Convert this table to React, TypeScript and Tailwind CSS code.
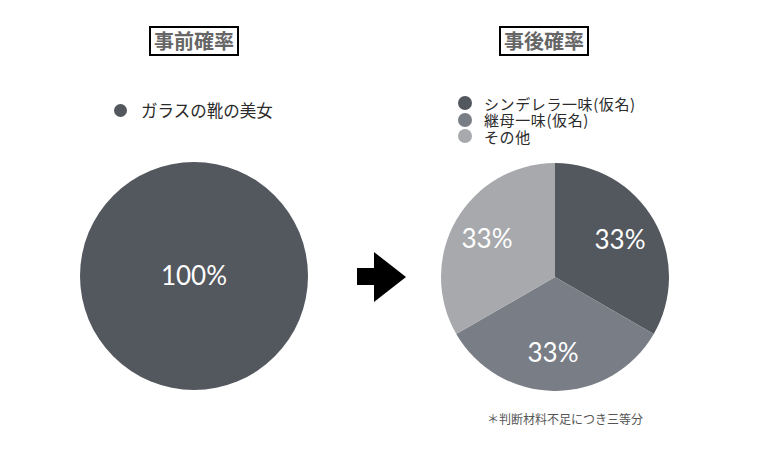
import React from "react";

const JP = "font-['Noto_Sans_CJK_JP',sans-serif]";

const DARK = "#53575e";
const MID = "#797d86";
const LIGHT = "#a7a9ac";

function Title({ children, className = "" }: { children: React.ReactNode; className?: string }) {
  return (
    <div
      className={`${JP} border-2 border-black px-[3px] h-[30px] flex items-center text-[20px] font-bold leading-none text-[#666666] ${className}`}
    >
      {children}
    </div>
  );
}

function LegendItem({ color, label }: { color: string; label: string }) {
  return (
    <div className="flex items-center h-[16.5px]">
      <span className="w-[14px] h-[14px] rounded-full shrink-0" style={{ backgroundColor: color }} />
      <span className={`${JP} ml-[12px] text-[15px] tracking-[0.6px] leading-[15px] text-[#2b2b2b]`}>{label}</span>
    </div>
  );
}

export default function App() {
  return (
    <div className="w-[781px] h-[461px] bg-white overflow-hidden">
      <div className="flex items-start pl-[80px]">
        {/* 事前 */}
        <div className="w-[228px] flex flex-col items-center">
          <Title className="mt-[26px]">事前確率</Title>
          <div className="self-start ml-[34px] mt-[44px] flex items-center h-[20px]">
            <span className="w-[13px] h-[13px] rounded-full" style={{ backgroundColor: DARK }} />
            <span className={`${JP} ml-[14px] text-[16.5px] leading-none text-[#2b2b2b]`}>ガラスの靴の美女</span>
          </div>
          <svg width="228" height="228" viewBox="0 0 228 228" className="mt-[42px]">
            <circle cx="114" cy="114" r="114" fill={DARK} />
            <text
              x="114"
              y="116"
              textAnchor="middle"
              dominantBaseline="middle"
              fill="white"
              fontSize="26"
              fontFamily="Lato, sans-serif"
            >
              100%
            </text>
          </svg>
        </div>

        {/* arrow */}
        <svg width="49" height="50" viewBox="0 0 49 50" className="ml-[49px] mt-[252px]">
          <rect x="0" y="16" width="19" height="17" fill="black" />
          <polygon points="17,0 49,25 17,50" fill="black" />
        </svg>

        {/* 事後 */}
        <div className="ml-[35px] w-[228px] flex flex-col items-center">
          <Title className="mt-[26px] mr-[22px]">事後確率</Title>
          <div className="self-start ml-[17px] mt-[39px] flex flex-col">
            <LegendItem color={DARK} label="シンデレラ一味(仮名)" />
            <LegendItem color={MID} label="継母一味(仮名)" />
            <LegendItem color={LIGHT} label="その他" />
          </div>
          <svg width="228" height="228" viewBox="0 0 228 228" className="mt-[18px]">
            <path d="M114,114 L114,0 A114,114 0 0 1 212.73,171 Z" fill={DARK} />
            <path d="M114,114 L212.73,171 A114,114 0 0 1 15.27,171 Z" fill={MID} />
            <path d="M114,114 L15.27,171 A114,114 0 0 1 114,0 Z" fill={LIGHT} />
            {[
              [179, 79],
              [46, 78],
              [112, 192],
            ].map(([x, y], i) => (
              <text
                key={i}
                x={x}
                y={y}
                textAnchor="middle"
                dominantBaseline="middle"
                fill="white"
                fontSize="26"
                fontFamily="Lato, sans-serif"
              >
                33%
              </text>
            ))}
          </svg>
          <div className={`${JP} self-start ml-[46px] mt-[20px] text-[12px] leading-[16px] text-[#555555]`}>
            ＊判断材料不足につき三等分
          </div>
        </div>
      </div>
    </div>
  );
}
